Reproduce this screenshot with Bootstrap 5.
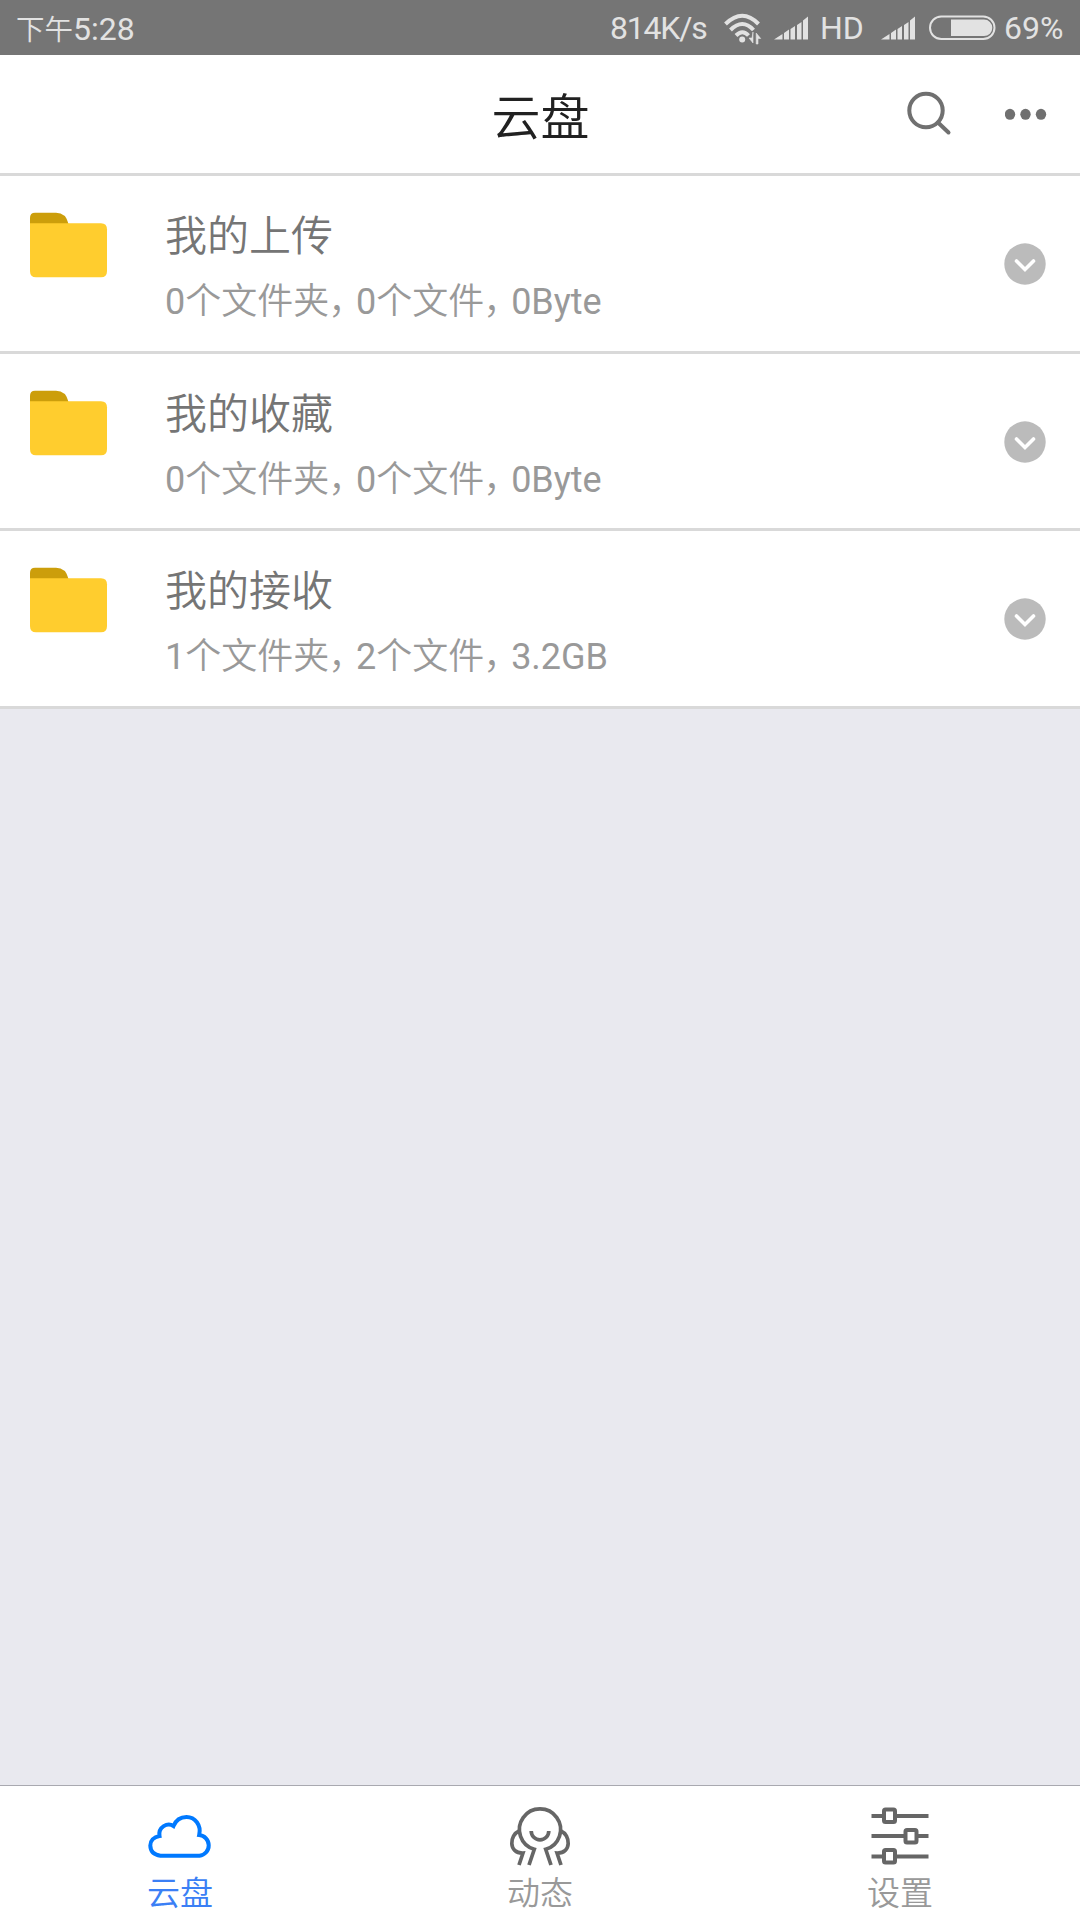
<!DOCTYPE html>
<html lang="zh-CN">
<head>
<meta charset="utf-8">
<meta name="viewport" content="width=device-width, initial-scale=1">
<title>云盘</title>
<link href="https://cdn.jsdelivr.net/npm/bootstrap@5.3.0/dist/css/bootstrap.min.css" rel="stylesheet">
<style>
body{font-family:Roboto,"Noto Sans CJK SC",sans-serif;background:#e9e9ef;height:1920px;overflow:hidden;line-height:1;font-weight:350}
svg{display:block;flex:none}
.status-bar{height:55px;background:#757575;color:#e2e2e2;font-size:32px;font-weight:400;padding:2px 16px 0;line-height:51px;white-space:nowrap}
.status-bar svg{margin-bottom:2px}
.clock-cn{font-size:28.5px;font-family:"Noto Sans CJK SC",sans-serif;font-weight:350}
.speed{width:114px;letter-spacing:-1.2px}.hd-label{width:61px}.percent{width:60px}
.signal{margin-left:12px}
.hd-label{margin-left:10px}
.hd-label + .signal{margin-left:0}
.status-bar .battery{margin-left:12px;margin-right:8px}
.title-bar{height:121px;border-bottom:3px solid #d9d9d9;padding:0 33px 0 34px}
.title-bar h1{font-size:49px;color:#212121;line-height:60px;font-weight:350;padding-top:9px}
.side{width:141px}
.list-group-flush > .file-row,.list-group-flush > .file-row:last-child{height:178px;border:0;border-bottom:3px solid #d9d9d9;border-radius:0;padding:0 34px 0 30px}
.list-group-flush > .file-row.tight{height:177px}
.tight .toggle{position:relative;top:1px}
.folder{margin-top:36px;margin-right:57px}
.file-name{font-size:42px;color:#757575;line-height:60px;margin-top:31px}
.file-info{font-size:36px;color:#999;line-height:50px;margin-top:6px;font-weight:400}
.cn{font-weight:350}
.comma{font-family:"Noto Sans CJK SC",sans-serif;margin-left:-1px;letter-spacing:-8.2px;font-weight:350}
.tab-bar{height:135px;border-top:1px solid #a9a9b0}
.tab-item{color:#999;font-size:33px;line-height:40px;padding-top:16px}
.tab-label{padding-top:2px}
.tab-item.active{color:#3b7ff5}
</style>
</head>
<body class="d-flex flex-column">
<div class="status-bar d-flex align-items-center flex-shrink-0">
  <div class="me-auto"><span class="clock-cn">下午</span>5:28</div>
  <div class="speed">814K/s</div>
  <svg width="38" height="36" viewBox="0 0 38 36" fill="none" stroke="#e2e2e2" stroke-width="4"><path d="M1.500 14Q18.500-2.500 34.500 14M6.500 20Q18.500 8 29.500 20M12 25.500Q18.500 19 24.500 25.500"/><circle cx="18.200" cy="29.500" r="3" fill="#e2e2e2" stroke="none"/><path d="M29 22v11l-4-5h3zM32.200 34V23l4.500 5.500H34v5.500z" fill="#e2e2e2" stroke="#e2e2e2" stroke-width=".6"/></svg>
  <svg class="signal" width="36" height="26" viewBox="0 0 36 26" fill="#e2e2e2"><path d="M0 24.500L8.500 19v5.500zM10 18l5-3.500v10h-5zM16.500 14l4.500-3v13.500h-4.500zM23 10l4.500-3v17.500H23zM29 5.500l5-4v23h-5z"/></svg>
  <div class="hd-label">HD</div>
  <svg class="signal" width="36" height="26" viewBox="0 0 36 26" fill="#e2e2e2"><path d="M0 24.500L8.500 19v5.500zM10 18l5-3.500v10h-5zM16.500 14l4.500-3v13.500h-4.500zM23 10l4.500-3v17.500H23zM29 5.500l5-4v23h-5z"/></svg>
  <svg class="battery" width="67" height="26" viewBox="0 0 67 26"><rect x="1" y="1.500" width="64.500" height="22.500" rx="11.250" fill="none" stroke="#e2e2e2" stroke-width="2"/><path d="M22 4.500h33a8.300 8.300 0 0 1 0 16.600H22z" fill="#e2e2e2"/></svg>
  <div class="percent">69%</div>
</div>
<header class="title-bar bg-white d-flex align-items-center justify-content-between flex-shrink-0">
  <div class="side"></div>
  <h1 class="m-0">云盘</h1>
  <div class="side d-flex justify-content-between align-items-center">
    <svg width="46" height="46" viewBox="0 0 46 46" fill="none" stroke="#707070" stroke-width="4"><circle cx="20" cy="19.500" r="16.700"/><path d="M32 31.500L42.500 41.500" stroke-linecap="round"/></svg>
    <svg width="42" height="12" viewBox="0 0 42 12" fill="#707070"><ellipse cx="5" cy="6.300" rx="5.200" ry="5.500"/><ellipse cx="20.500" cy="6.300" rx="5.200" ry="5.500"/><ellipse cx="36" cy="6.300" rx="5.200" ry="5.500"/></svg>
  </div>
</header>
<main class="list-group list-group-flush flex-shrink-0">
  <div class="file-row list-group-item d-flex">
    <svg class="folder" width="78" height="66" viewBox="0 0 78 66"><path d="M0 12V6Q0 .700 5 .700H26Q36 .700 38.500 12z" fill="#cc9e0b"/><path d="M0 11.300H71Q77 11.300 77 17.300V59Q77 65.300 71 65.300H6Q0 65.300 0 59z" fill="#ffcd2e"/></svg>
    <div class="flex-grow-1"><div class="file-name">我的上传</div><div class="file-info">0<span class="cn">个文件夹</span><span class="comma">&#65292;</span>0<span class="cn">个文件</span><span class="comma">&#65292;</span>0Byte</div></div>
    <svg class="toggle align-self-center" width="42" height="42" viewBox="0 0 42 42"><circle cx="21" cy="21" r="20.700" fill="#bbb"/><path d="M12.500 18L21 26.500L29.500 18" fill="none" stroke="#fff" stroke-width="3.600" stroke-linecap="round"/></svg>
  </div>
  <div class="file-row tight list-group-item d-flex">
    <svg class="folder" width="78" height="66" viewBox="0 0 78 66"><path d="M0 12V6Q0 .700 5 .700H26Q36 .700 38.500 12z" fill="#cc9e0b"/><path d="M0 11.300H71Q77 11.300 77 17.300V59Q77 65.300 71 65.300H6Q0 65.300 0 59z" fill="#ffcd2e"/></svg>
    <div class="flex-grow-1"><div class="file-name">我的收藏</div><div class="file-info">0<span class="cn">个文件夹</span><span class="comma">&#65292;</span>0<span class="cn">个文件</span><span class="comma">&#65292;</span>0Byte</div></div>
    <svg class="toggle align-self-center" width="42" height="42" viewBox="0 0 42 42"><circle cx="21" cy="21" r="20.700" fill="#bbb"/><path d="M12.500 18L21 26.500L29.500 18" fill="none" stroke="#fff" stroke-width="3.600" stroke-linecap="round"/></svg>
  </div>
  <div class="file-row list-group-item d-flex">
    <svg class="folder" width="78" height="66" viewBox="0 0 78 66"><path d="M0 12V6Q0 .700 5 .700H26Q36 .700 38.500 12z" fill="#cc9e0b"/><path d="M0 11.300H71Q77 11.300 77 17.300V59Q77 65.300 71 65.300H6Q0 65.300 0 59z" fill="#ffcd2e"/></svg>
    <div class="flex-grow-1"><div class="file-name">我的接收</div><div class="file-info">1<span class="cn">个文件夹</span><span class="comma">&#65292;</span>2<span class="cn">个文件</span><span class="comma">&#65292;</span>3.2GB</div></div>
    <svg class="toggle align-self-center" width="42" height="42" viewBox="0 0 42 42"><circle cx="21" cy="21" r="20.700" fill="#bbb"/><path d="M12.500 18L21 26.500L29.500 18" fill="none" stroke="#fff" stroke-width="3.600" stroke-linecap="round"/></svg>
  </div>
</main>
<nav class="tab-bar bg-white d-flex mt-auto flex-shrink-0">
  <div class="tab-item active flex-fill w-100 d-flex flex-column align-items-center">
    <svg width="66" height="70" viewBox="0 0 66 70" fill="none" stroke="#0079ff" stroke-width="4"><path d="M13.500 53.700H52.500A10.400 10.400 0 0 0 52.200 33C54.500 23 48 15 39.500 15C33.500 15 29 18 26.500 24C20.500 20 11 25 12.500 34C6.500 35 3.300 39 3.300 43.500Q3.500 52.500 13.500 53.700z"/></svg>
    <div class="tab-label">云盘</div>
  </div>
  <div class="tab-item flex-fill w-100 d-flex flex-column align-items-center">
    <svg width="66" height="70" viewBox="0 0 66 70" fill="none" stroke="#666" stroke-width="3.700"><path d="M22 63L27.300 47.300A20.600 20.600 0 1 1 38.700 47.300L44 63M24.200 29A8.800 8.800 0 0 0 41.800 29"/><path d="M12 29C2.500 33 1 51.500 16 51L12 63M54 29C63.500 33 65 51.500 50 51L54 63"/></svg>
    <div class="tab-label">动态</div>
  </div>
  <div class="tab-item flex-fill w-100 d-flex flex-column align-items-center">
    <svg width="66" height="70" viewBox="0 0 66 70" fill="none" stroke="#666" stroke-width="4"><path d="M4.500 14H17M28 14H61.500M4.500 34H39M49 34H61.500M4.500 54.500H17M28 54.500H61.500"/><rect x="17" y="7.500" width="11" height="12.500" rx="1.500"/><rect x="38.500" y="28" width="11" height="12.500" rx="1.500"/><rect x="17" y="48" width="11" height="12.500" rx="1.500"/></svg>
    <div class="tab-label">设置</div>
  </div>
</nav>
<script src="https://cdn.jsdelivr.net/npm/bootstrap@5.3.0/dist/js/bootstrap.bundle.min.js"></script>
</body>
</html>
